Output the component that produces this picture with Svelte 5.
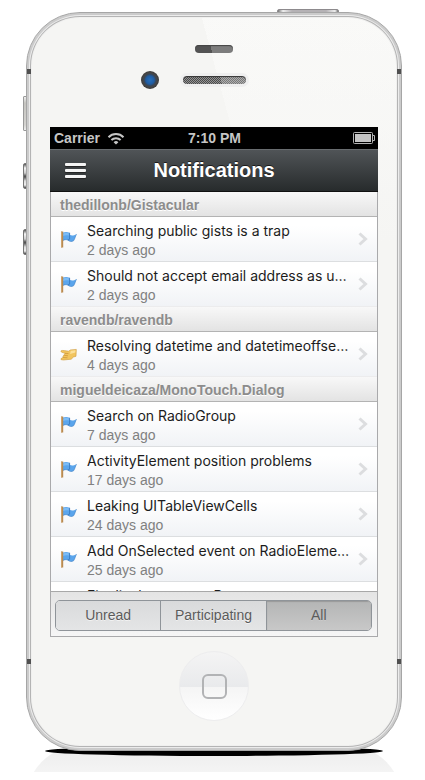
<script>
  const sections = [
    {
      repo: 'thedillonb/Gistacular',
      items: [
        { kind: 'issue', title: 'Searching public gists is a trap', age: '2 days ago' },
        { kind: 'issue', title: 'Should not accept email address as u…', age: '2 days ago' }
      ]
    },
    {
      repo: 'ravendb/ravendb',
      items: [{ kind: 'pull', title: 'Resolving datetime and datetimeoffse…', age: '4 days ago' }]
    },
    {
      repo: 'migueldeicaza/MonoTouch.Dialog',
      items: [
        { kind: 'issue', title: 'Search on RadioGroup', age: '7 days ago' },
        { kind: 'issue', title: 'ActivityElement position problems', age: '17 days ago' },
        { kind: 'issue', title: 'Leaking UITableViewCells', age: '24 days ago' },
        { kind: 'issue', title: 'Add OnSelected event on RadioEleme…', age: '25 days ago' },
        { kind: 'issue', title: 'Fix display types a P' }
      ]
    }
  ];
  const filters = ['Unread', 'Participating', 'All'];
  let selected = $state('All');
</script>

<main class="stage">
  <div class="reflection"></div>
  <div class="ground"></div>
  <span class="key power"></span>
  <span class="key mute"></span>
  <span class="key volume up"></span>
  <span class="key volume down"></span>

  <div class="phone">
    <i class="band tl"></i><i class="band tr"></i><i class="band bl"></i><i class="band br"></i>

    <div class="forehead">
      <div class="sensor"></div>
      <div class="optics">
        <div class="camera"></div>
        <div class="speaker"><div class="grill"></div></div>
      </div>
    </div>

    <div class="screen">
      <div class="status">
        <span class="carrier">
          Carrier
          <svg width="18" height="13" viewBox="0 0 18 13" fill="none" stroke="#c6c6c6" stroke-width="2">
            <path d="M1.5 5.2a10.6 10.6 0 0 1 15 0" />
            <path d="M4.4 8a6.6 6.6 0 0 1 9.2 0" />
            <path d="M6.6 10.2a3.4 3.4 0 0 1 4.8 0L9 12.6z" fill="#c6c6c6" stroke="none" />
          </svg>
        </span>
        <span class="time">7:10 PM</span>
        <svg class="battery" width="22" height="12" viewBox="0 0 22 12">
          <rect x="0.5" y="0.5" width="19" height="11" rx="1" fill="none" stroke="#b4b4b4" />
          <rect x="2" y="2" width="16" height="8" fill="#c4c4c4" />
          <path d="M20 3.5h1.5v5H20" fill="none" stroke="#b4b4b4" />
        </svg>
      </div>

      <header class="nav">
        <button class="menu" aria-label="Menu"><i></i><i></i><i></i></button>
        <h1>Notifications</h1>
      </header>

      <div class="list">
        {#each sections as section}
          <section>
            <h2>{section.repo}</h2>
            {#each section.items as item}
              <a class="row" href="#top">
                {#if item.kind === 'issue'}
                  <svg class="icon" width="17" height="17" viewBox="0 0 17 17">
                    <path d="M3 1.600C5 .6 7.500.7 9.600 1.800L10 4C12 4.900 14 4.400 16.500 3.200 15.200 5.200 15 8 13.500 9.800 11.600 10.900 9.400 10.600 7.800 9 6.200 8.400 4.500 8.600 3 9.400z" fill="#5aa5ec" />
                    <path d="M3 2.400C5 1.400 7 1.500 8.800 2.300V4.600C7 3.900 5 4 3 4.900z" fill="#7cbcf6" />
                    <path d="M9.600 1.800V8.200L7.800 9" fill="none" stroke="#3674b8" stroke-width=".8" />
                    <path d="M3 9.400C4.500 8.600 6.200 8.400 7.800 9c1.600 1.600 3.800 1.900 5.700.8C15 8 15.200 5.200 16.500 3.200" fill="none" stroke="#4585c8" stroke-width=".7" />
                    <rect x="1" y="0.500" width="2.200" height="16" fill="#b88a52" />
                    <rect x="1" y="0.500" width=".8" height="16" fill="#d2ab77" />
                  </svg>
                {:else}
                  <svg class="icon" width="17" height="17" viewBox="0 0 17 17">
                    <path d="M1.200 4.700C2 4.100 6.500 4.900 8.500 5.200L10.500 3.900 16.300 3.400 16 10.300 13.500 11 11.200 13.200 3.500 14 1 13.600C.7 12.500 1.800 11.900 3.200 11.500L3 10.200 4.200 8.700 5 7.300 1.800 6.300C1 6 .9 5.200 1.200 4.700z" fill="#f2c55f" stroke="#cf9a3c" stroke-width=".6" stroke-linejoin="round" />
                    <path d="M10.800 4.700 15.500 4.200 15.400 6.500 10 8z" fill="#fbe09a" />
                    <path d="M5 7.300 8.500 7.600M4.200 9.300 8 9.800M3.200 11.500 7.500 11.800" stroke="#c98f35" stroke-width=".7" fill="none" />
                  </svg>
                {/if}
                <span class="text">
                  <span class="title">{item.title}</span>
                  {#if item.age}<span class="age">{item.age}</span>{/if}
                </span>
                <svg class="chevron" width="10" height="14" viewBox="0 0 10 14" fill="none">
                  <path d="M1.500 1.500 7.500 7 1.500 12.500" stroke="#dcdddf" stroke-width="3" />
                </svg>
              </a>
            {/each}
          </section>
        {/each}
      </div>

      <div class="toolbar">
        <div class="segments">
          {#each filters as name}
            <button class:selected={selected === name} aria-pressed={selected === name} onclick={() => (selected = name)}>{name}</button>
          {/each}
        </div>
      </div>
    </div>

    <button class="home" aria-label="Home"><i></i></button>
  </div>
</main>

<style>
  :global(body) {
    margin: 0;
    background: #fff;
  }
  * {
    box-sizing: border-box;
  }
  .stage {
    position: relative;
    padding: 12px 23px 21px 26px;
    overflow: hidden;
    font-family: 'Liberation Sans', Arial, Helvetica, sans-serif;
  }
  .reflection {
    position: absolute;
    left: 26px;
    right: 23px;
    bottom: 0;
    height: 26px;
    overflow: hidden;
  }
  .reflection::before {
    content: '';
    display: block;
    height: 120px;
    border-radius: 54px;
    background: linear-gradient(#ececec, #f4f4f4 26px);
  }
  .ground {
    position: absolute;
    left: 45px;
    right: 42px;
    bottom: 16px;
    height: 10px;
    border-radius: 50%;
    background: #000;
  }
  .key {
    position: absolute;
    border: 1px solid #999;
    background: #ddd;
  }
  .power {
    top: 9px;
    right: 86px;
    width: 62px;
    height: 6px;
    border-color: #8d8a8d;
    border-radius: 2px 2px 0 0;
    background: linear-gradient(90deg, #777, #eee 5px, #b5b2b5 14px, #b5b2b5 48px, #eee 57px, #777);
  }
  .mute {
    left: 23px;
    top: 96px;
    width: 6px;
    height: 35px;
    border-radius: 1px;
    background: linear-gradient(#eee, #c5c4c0 6px, #d4d3d0 28px, #eee);
  }
  .volume {
    left: 23px;
    width: 6px;
    height: 26px;
    border-color: #777;
    border-radius: 2px;
    background: linear-gradient(#555, #f5f5f5 4px, #ccc 9px, #555 12px, #555 13px, #ddd 17px, #eee 21px, #444);
  }
  .up {
    top: 163px;
  }
  .down {
    top: 229px;
  }
  .phone {
    position: relative;
    padding: 32px 23px 29px;
    border: 1px solid #a6a6a6;
    border-radius: 54px;
    background:
      linear-gradient(rgba(245, 245, 243, 0), #f5f5f3) 0 0 / 100% 230px no-repeat,
      linear-gradient(75deg, transparent 54%, rgba(255, 255, 255, 0.45) 54%) 0 0 / 100% 230px no-repeat,
      #f5f5f3;
    box-shadow:
      inset 0 0 0 2px #cbcbcb,
      inset 0 0 0 3px #ececec,
      inset 0 0 0 4px #b4b4b4,
      inset 0 0 0 5px #f0f0ef;
  }
  .band {
    position: absolute;
    width: 4px;
    height: 5px;
    background: #505050;
  }
  .tl, .tr {
    top: 56px;
  }
  .bl, .br {
    bottom: 86px;
  }
  .tl, .bl {
    left: 0;
  }
  .tr, .br {
    right: 0;
  }
  .sensor {
    width: 38px;
    height: 8px;
    margin: 0 auto 18px;
    border-radius: 4px;
    background: linear-gradient(75deg, #535353 43%, #7d7d7d 43%);
    box-shadow: inset 0 1px 1px #444;
  }
  .optics {
    display: grid;
    grid-template-columns: 1fr auto 1fr;
    gap: 21px;
    align-items: center;
    margin-bottom: 38px;
  }
  .camera {
    justify-self: end;
    width: 18px;
    height: 18px;
    border-radius: 50%;
    background: radial-gradient(circle, #2a6fb8 0, #1e5da4 4px, #3a4655 6px, #474747 7px, #3a3a3a 9px);
  }
  .speaker {
    padding: 3px;
    border-radius: 7px;
    background: #efefef;
  }
  .grill {
    width: 63px;
    height: 8px;
    border-radius: 4px;
    background:
      linear-gradient(75deg, transparent 60%, rgba(255, 255, 255, 0.25) 60%),
      repeating-conic-gradient(#4a4a4a 0 25%, #949494 0 50%) 0 0 / 2px 2px;
    box-shadow: inset 0 1px 1px #333;
  }
  .screen {
    position: relative;
    height: 510px;
    display: flex;
    flex-direction: column;
    background: #fff;
  }
  .screen::after {
    content: '';
    position: absolute;
    inset: 65px 0 0;
    border: solid #a9a9ab;
    border-width: 0 1px 1px;
    pointer-events: none;
  }
  .status {
    flex: none;
    display: grid;
    grid-template-columns: 1fr auto 1fr;
    align-items: center;
    height: 22px;
    padding: 0 3px 0 4px;
    background: #000;
    color: #c6c6c6;
    font-size: 14px;
    font-weight: bold;
    line-height: 22px;
  }
  .carrier {
    display: flex;
    align-items: center;
    gap: 7px;
  }
  .battery {
    justify-self: end;
  }
  .nav {
    flex: none;
    position: relative;
    height: 43px;
    border-top: 1px solid #686c6f;
    border-bottom: 1px solid #111;
    background: linear-gradient(#505457, #272b2c);
  }
  h1 {
    margin: 0;
    color: #fff;
    font-size: 20px;
    line-height: 40px;
    text-align: center;
    text-shadow: 0 -1px 0 #1a1a1a;
  }
  .menu {
    position: absolute;
    left: 6px;
    top: 4px;
    display: flex;
    flex-direction: column;
    gap: 3px;
    padding: 9px;
    border: 0;
    background: none;
  }
  .menu i {
    width: 21px;
    height: 3px;
    border-radius: 1px;
    background: #f4f4f4;
    box-shadow: 0 1px 1px #222;
  }
  .list {
    flex: 1;
    min-height: 0;
    overflow: hidden;
  }
  h2 {
    height: 25px;
    margin: 0;
    padding: 0 10px;
    border-bottom: 1px solid #b3b3b3;
    background: linear-gradient(#f8f8f8, #e3e3e3);
    color: #8c8c8c;
    font-size: 14px;
    line-height: 26px;
    text-shadow: 0 1px 0 #fff;
  }
  .row {
    display: flex;
    align-items: center;
    height: 45px;
    padding: 0 10px;
    border-bottom: 1px solid #dcdee0;
    background: linear-gradient(#fff 20%, #f1f3f6);
    text-decoration: none;
  }
  .row:last-child {
    border-bottom-color: #ececed;
  }
  .icon {
    flex: none;
    margin-right: 10px;
  }
  .text {
    flex: 1;
    align-self: flex-start;
    min-width: 0;
    padding-top: 4px;
  }
  .title, .age {
    display: block;
    white-space: nowrap;
  }
  .title {
    color: #1c1c1c;
    font-family: Inter, 'Liberation Sans', sans-serif;
    font-size: 14px;
    line-height: 20px;
  }
  .age {
    color: #808080;
    font-size: 14px;
    line-height: 18px;
  }
  .chevron {
    flex: none;
  }
  .toolbar {
    flex: none;
    padding: 8px 6px 6px 5px;
    border-top: 1px solid #a8a8a8;
    background: linear-gradient(#e4e4e4, #f6f6f6);
  }
  .segments {
    display: flex;
    height: 31px;
    border: 1px solid #8f9499;
    border-radius: 5px;
    overflow: hidden;
  }
  .segments button {
    flex: 1 1 0;
    min-width: 0;
    padding: 0;
    border: 0;
    background: linear-gradient(#d9dadb, #e4e5e6);
    color: #5b5b5b;
    font: 14px/29px 'Liberation Sans', Arial, sans-serif;
    text-shadow: 0 1px 0 #f2f2f2;
  }
  .segments button + button {
    border-left: 1px solid #8f9499;
  }
  .segments .selected {
    background: linear-gradient(#b4b5b5, #c8c8c8);
    box-shadow: inset 0 1px 1px #9a9a9a;
    text-shadow: 0 1px 0 #ccc;
  }
  .home {
    display: grid;
    place-items: center;
    width: 70px;
    height: 70px;
    margin: 14px auto 0;
    padding: 0;
    border: 1px solid #ededee;
    border-radius: 50%;
    background: linear-gradient(#f4f4f4, #e9eaec 51%, #f5f5f5 52%, #fff);
  }
  .home i {
    width: 25px;
    height: 25px;
    border: 2px solid #b2b3b5;
    border-radius: 6px;
  }
</style>
